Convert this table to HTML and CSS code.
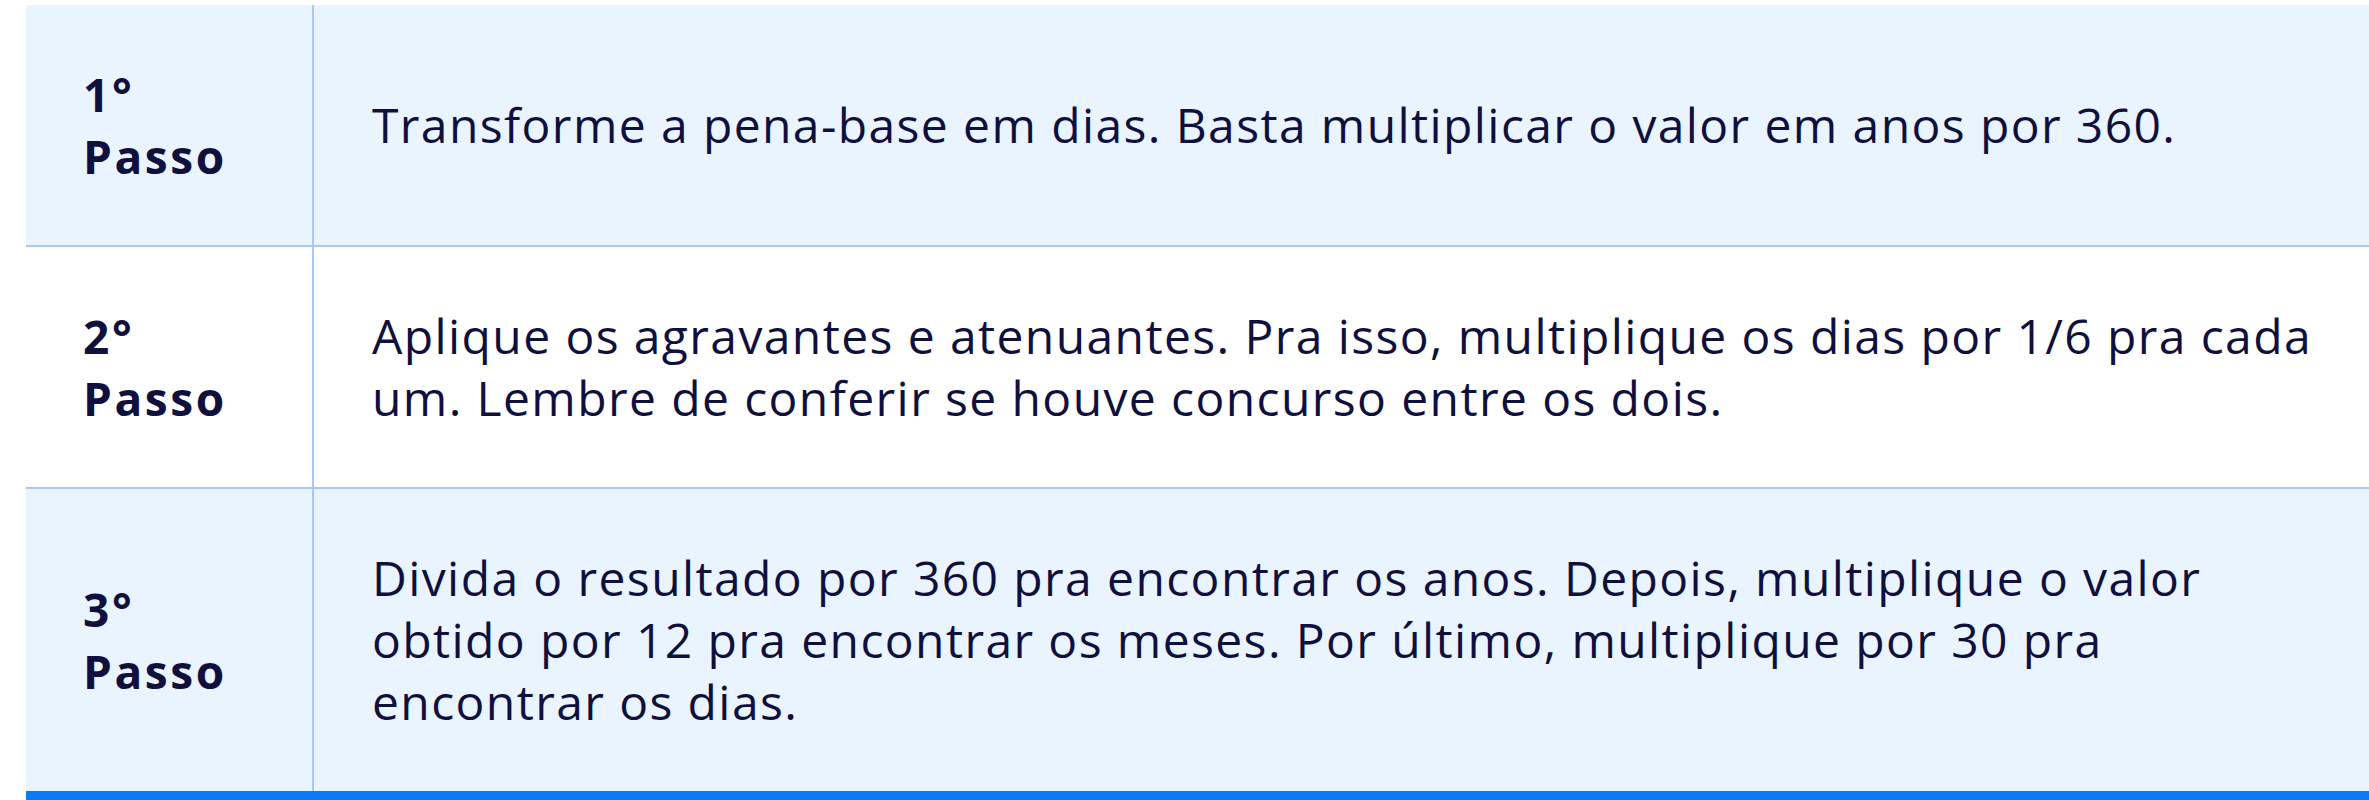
FILE: index.html
```html
<!DOCTYPE html>
<html lang="pt-BR">
<head>
<meta charset="utf-8">
<title>Passos</title>
<link rel="stylesheet" href="styles.css">
</head>
<body>
<div class="wrap">
  <table class="steps">
    <tbody>
      <tr class="row shaded">
        <th class="label">1°<br>Passo</th>
        <td class="desc">Transforme a pena-base em dias. Basta multiplicar o valor em anos por 360.</td>
      </tr>
      <tr class="row">
        <th class="label">2°<br>Passo</th>
        <td class="desc">Aplique os agravantes e atenuantes. Pra isso, multiplique os dias por 1/6 pra cada<br>um. Lembre de conferir se houve concurso entre os dois.</td>
      </tr>
      <tr class="row shaded last">
        <th class="label">3°<br>Passo</th>
        <td class="desc">Divida o resultado por 360 pra encontrar os anos. Depois, multiplique o valor<br>obtido por 12 pra encontrar os meses. Por último, multiplique por 30 pra<br>encontrar os dias.</td>
      </tr>
    </tbody>
  </table>
</div>
</body>
</html>
```

FILE: styles.css
```css
html, body {
  margin: 0;
  padding: 0;
  background: #ffffff;
  overflow: hidden;
}

.wrap {
  padding: 5px 0 0 26px;
}

.steps {
  width: 100%;
  border-collapse: collapse;
  font-family: "Open Sans", "Noto Sans", sans-serif;
  color: #10103e;
}

.row {
  background: #ffffff;
}

.row.shaded {
  background: #eaf4ff;
}

.row + .row {
  border-top: 2px solid #a6caf6;
}

.row.last {
  border-bottom: 13px solid #0b7af6;
}

.label {
  width: 229px;
  padding: 58px 0 58px 57px;
  text-align: left;
  vertical-align: middle;
  font-size: 46px;
  font-weight: 700;
  line-height: 62px;
  letter-spacing: 2.6px;
  border-right: 2px solid #a6caf6;
}

.desc {
  padding: 58px 40px 58px 58px;
  vertical-align: middle;
  font-size: 48px;
  font-weight: 500;
  line-height: 62px;
  letter-spacing: 1.4px;
  white-space: nowrap;
}
```
